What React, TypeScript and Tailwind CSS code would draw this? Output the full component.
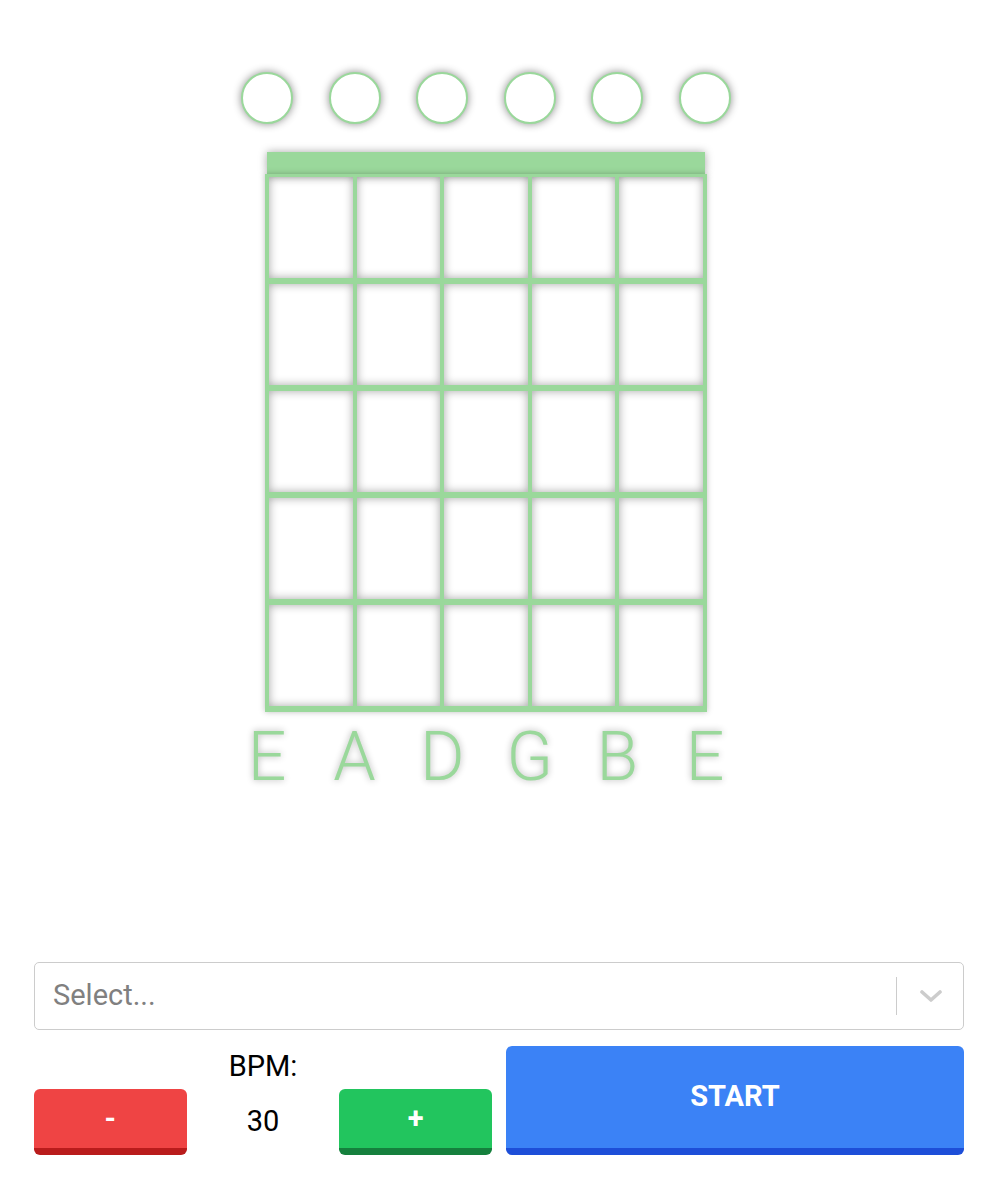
const strings = ["E", "A", "D", "G", "B", "E"];
const frets = [0, 1, 2, 3, 4];

function ChevronDown() {
  return (
    <svg width="22" height="14" viewBox="0 0 22 14" fill="none">
      <polyline
        points="2,3 11,11 20,3"
        stroke="#cccccc"
        strokeWidth="3.6"
        strokeLinecap="round"
        strokeLinejoin="round"
      />
    </svg>
  );
}

function Fretboard() {
  return (
    <div className="flex justify-center pr-[28px] pt-[72px]">
      <div className="w-[490px] flex flex-col items-center">
        {/* Open string markers */}
        <div className="w-full flex justify-between">
          {strings.map((s, i) => (
            <div
              key={i}
              className="w-[52px] h-[52px] rounded-full bg-white border-2 border-[#9ad89b] shadow-[0_0_8px_rgba(0,0,0,0.45)]"
            />
          ))}
        </div>

        {/* Nut */}
        <div className="mt-[28px] w-[438px] h-[22px] bg-[#9ad89b] shadow-[0_0_8px_rgba(0,0,0,0.35)]" />

        {/* Frets */}
        <div className="w-[442px] grid grid-cols-5 border-x-2 border-b-[3px] border-[#9ad89b] shadow-[0_0_6px_rgba(0,0,0,0.25)]">
          {frets.map((f) =>
            frets.map((c) => (
              <div
                key={`${f}-${c}`}
                className="h-[107px] border-x-2 border-y-[3px] border-[#9ad89b] shadow-[inset_0_0_10px_rgba(0,0,0,0.35)]"
              />
            ))
          )}
        </div>

        {/* String names */}
        <div className="mt-[11px] w-full flex justify-between">
          {strings.map((s, i) => (
            <div
              key={i}
              className="w-[52px] text-center text-[68px] leading-none font-light text-[#9ad89b] [text-shadow:0_0_7px_rgba(0,0,0,0.3)]"
            >
              {s}
            </div>
          ))}
        </div>
      </div>
    </div>
  );
}

export default function App() {
  return (
    <div className="min-h-screen bg-white font-['Roboto','Liberation_Sans',sans-serif] text-black">
      <Fretboard />

      <div className="mt-[171px] pl-[34px] pr-[36px] flex flex-col gap-[16px]">
        {/* Select */}
        <div className="h-[68px] flex items-center border border-[#cccccc] rounded-[5px] bg-white">
          <div className="flex-1 pl-[18px] text-[29px] text-[#808080]">Select...</div>
          <div className="w-px h-[38px] bg-[#cccccc]" />
          <div className="pl-[23px] pr-[21px] flex items-center">
            <ChevronDown />
          </div>
        </div>

        {/* Controls */}
        <div className="grid grid-cols-2 gap-[14px]">
          <div className="grid grid-cols-3 items-end">
            <button className="h-[66px] flex items-center justify-center rounded-md bg-[#ef4444] border-b-[7px] border-[#b91c1c] text-white text-[29px] font-bold">
              -
            </button>
            <div className="flex flex-col items-center">
              <div className="text-[29px] leading-none">BPM:</div>
              <div className="mt-[8px] h-[66px] flex items-center justify-center text-[29px]">30</div>
            </div>
            <button className="h-[66px] flex items-center justify-center rounded-md bg-[#22c55e] border-b-[7px] border-[#15803d] text-white text-[29px] font-bold">
              +
            </button>
          </div>
          <button className="h-[109px] flex items-center justify-center rounded-md bg-[#3b82f6] border-b-[7px] border-[#1d4ed8] text-white text-[29px] font-bold">
            START
          </button>
        </div>
      </div>
    </div>
  );
}
